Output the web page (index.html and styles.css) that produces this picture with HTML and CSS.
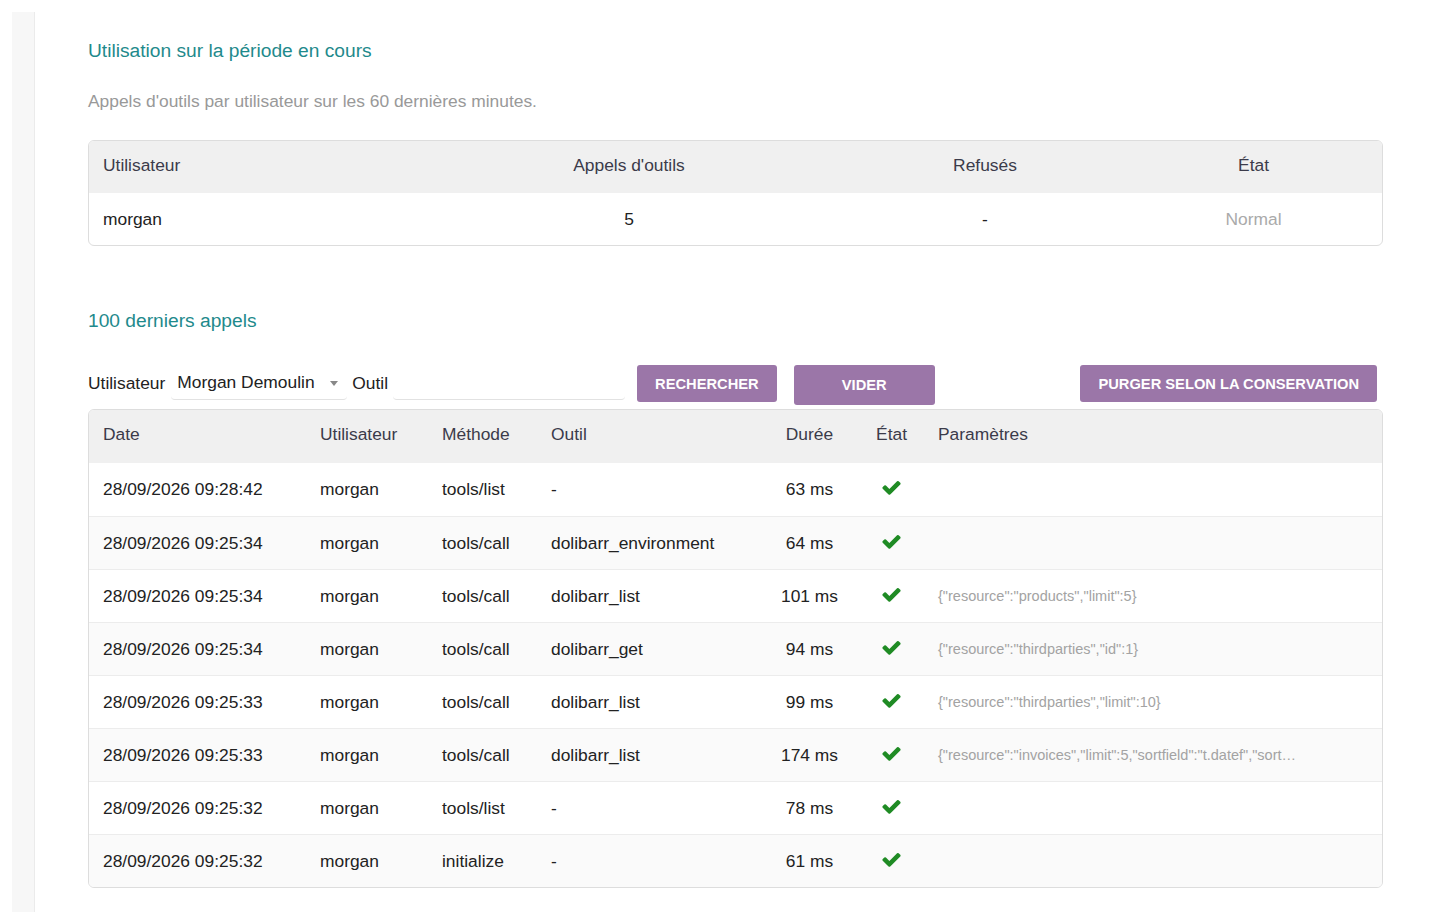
FILE: index.html
```html
<!DOCTYPE html>
<html lang="fr">
<head>
<meta charset="utf-8">
<title>Utilisation</title>
<link rel="stylesheet" href="styles.css">
</head>
<body>
<div class="page">
  <aside class="sidebar"></aside>
  <main class="main">
    <h2 class="section-title">Utilisation sur la période en cours</h2>
    <p class="hint">Appels d'outils par utilisateur sur les 60 dernières minutes.</p>

    <div class="card usage">
      <div class="row head">
        <div class="cell">Utilisateur</div>
        <div class="cell center">Appels d'outils</div>
        <div class="cell center">Refusés</div>
        <div class="cell center">État</div>
      </div>
      <div class="row">
        <div class="cell">morgan</div>
        <div class="cell center">5</div>
        <div class="cell center">-</div>
        <div class="cell center muted">Normal</div>
      </div>
    </div>

    <h2 class="section-title second">100 derniers appels</h2>

    <form class="filters">
      <label class="flabel">Utilisateur</label>
      <div class="select">
        <span>Morgan Demoulin</span>
        <span class="caret"></span>
      </div>
      <label class="flabel outil">Outil</label>
      <div class="input"></div>
      <button type="button" class="btn">RECHERCHER</button>
      <button type="button" class="btn btn-wide">VIDER</button>
      <button type="button" class="btn btn-right">PURGER SELON LA CONSERVATION</button>
    </form>

    <div class="card calls">
      <div class="row head">
        <div class="cell">Date</div>
        <div class="cell">Utilisateur</div>
        <div class="cell">Méthode</div>
        <div class="cell">Outil</div>
        <div class="cell center">Durée</div>
        <div class="cell center">État</div>
        <div class="cell">Paramètres</div>
      </div>
      <div class="row body">
        <div class="cell">28/09/2026 09:28:42</div>
        <div class="cell">morgan</div>
        <div class="cell">tools/list</div>
        <div class="cell">-</div>
        <div class="cell center">63 ms</div>
        <div class="cell center"><svg class="ok" viewBox="0 0 1792 1792"><path d="M1671 566q0 40-28 68l-724 724-136 136q-28 28-68 28t-68-28l-136-136-362-362q-28-28-28-68t28-68l136-136q28-28 68-28t68 28l294 295 656-657q28-28 68-28t68 28l136 136q28 28 28 68z"/></svg></div>
        <div class="cell params"></div>
      </div>
      <div class="row body">
        <div class="cell">28/09/2026 09:25:34</div>
        <div class="cell">morgan</div>
        <div class="cell">tools/call</div>
        <div class="cell">dolibarr_environment</div>
        <div class="cell center">64 ms</div>
        <div class="cell center"><svg class="ok" viewBox="0 0 1792 1792"><path d="M1671 566q0 40-28 68l-724 724-136 136q-28 28-68 28t-68-28l-136-136-362-362q-28-28-28-68t28-68l136-136q28-28 68-28t68 28l294 295 656-657q28-28 68-28t68 28l136 136q28 28 28 68z"/></svg></div>
        <div class="cell params"></div>
      </div>
      <div class="row body">
        <div class="cell">28/09/2026 09:25:34</div>
        <div class="cell">morgan</div>
        <div class="cell">tools/call</div>
        <div class="cell">dolibarr_list</div>
        <div class="cell center">101 ms</div>
        <div class="cell center"><svg class="ok" viewBox="0 0 1792 1792"><path d="M1671 566q0 40-28 68l-724 724-136 136q-28 28-68 28t-68-28l-136-136-362-362q-28-28-28-68t28-68l136-136q28-28 68-28t68 28l294 295 656-657q28-28 68-28t68 28l136 136q28 28 28 68z"/></svg></div>
        <div class="cell params"><span class="json">{"resource":"products","limit":5}</span></div>
      </div>
      <div class="row body">
        <div class="cell">28/09/2026 09:25:34</div>
        <div class="cell">morgan</div>
        <div class="cell">tools/call</div>
        <div class="cell">dolibarr_get</div>
        <div class="cell center">94 ms</div>
        <div class="cell center"><svg class="ok" viewBox="0 0 1792 1792"><path d="M1671 566q0 40-28 68l-724 724-136 136q-28 28-68 28t-68-28l-136-136-362-362q-28-28-28-68t28-68l136-136q28-28 68-28t68 28l294 295 656-657q28-28 68-28t68 28l136 136q28 28 28 68z"/></svg></div>
        <div class="cell params"><span class="json">{"resource":"thirdparties","id":1}</span></div>
      </div>
      <div class="row body">
        <div class="cell">28/09/2026 09:25:33</div>
        <div class="cell">morgan</div>
        <div class="cell">tools/call</div>
        <div class="cell">dolibarr_list</div>
        <div class="cell center">99 ms</div>
        <div class="cell center"><svg class="ok" viewBox="0 0 1792 1792"><path d="M1671 566q0 40-28 68l-724 724-136 136q-28 28-68 28t-68-28l-136-136-362-362q-28-28-28-68t28-68l136-136q28-28 68-28t68 28l294 295 656-657q28-28 68-28t68 28l136 136q28 28 28 68z"/></svg></div>
        <div class="cell params"><span class="json">{"resource":"thirdparties","limit":10}</span></div>
      </div>
      <div class="row body">
        <div class="cell">28/09/2026 09:25:33</div>
        <div class="cell">morgan</div>
        <div class="cell">tools/call</div>
        <div class="cell">dolibarr_list</div>
        <div class="cell center">174 ms</div>
        <div class="cell center"><svg class="ok" viewBox="0 0 1792 1792"><path d="M1671 566q0 40-28 68l-724 724-136 136q-28 28-68 28t-68-28l-136-136-362-362q-28-28-28-68t28-68l136-136q28-28 68-28t68 28l294 295 656-657q28-28 68-28t68 28l136 136q28 28 28 68z"/></svg></div>
        <div class="cell params"><span class="json">{"resource":"invoices","limit":5,"sortfield":"t.datef","sort…</span></div>
      </div>
      <div class="row body">
        <div class="cell">28/09/2026 09:25:32</div>
        <div class="cell">morgan</div>
        <div class="cell">tools/list</div>
        <div class="cell">-</div>
        <div class="cell center">78 ms</div>
        <div class="cell center"><svg class="ok" viewBox="0 0 1792 1792"><path d="M1671 566q0 40-28 68l-724 724-136 136q-28 28-68 28t-68-28l-136-136-362-362q-28-28-28-68t28-68l136-136q28-28 68-28t68 28l294 295 656-657q28-28 68-28t68 28l136 136q28 28 28 68z"/></svg></div>
        <div class="cell params"></div>
      </div>
      <div class="row body">
        <div class="cell">28/09/2026 09:25:32</div>
        <div class="cell">morgan</div>
        <div class="cell">initialize</div>
        <div class="cell">-</div>
        <div class="cell center">61 ms</div>
        <div class="cell center"><svg class="ok" viewBox="0 0 1792 1792"><path d="M1671 566q0 40-28 68l-724 724-136 136q-28 28-68 28t-68-28l-136-136-362-362q-28-28-28-68t28-68l136-136q28-28 68-28t68 28l294 295 656-657q28-28 68-28t68 28l136 136q28 28 28 68z"/></svg></div>
        <div class="cell params"></div>
      </div>
    </div>
  </main>
</div>
</body>
</html>
```

FILE: styles.css
```css
* { box-sizing: border-box; }

html, body {
  margin: 0;
  padding: 0;
  background: #ffffff;
}

body {
  font-family: "Liberation Sans", Arial, sans-serif;
  font-size: 17.4px;
  color: #222222;
}

.page {
  display: flex;
  padding: 12px;
  height: 924px;
}

.sidebar {
  width: 23px;
  flex: none;
  background: #f7f7f7;
  border-right: 1px solid #ebebeb;
}

.main {
  flex: 1;
  padding: 27px 45px 0 53px;
}

.section-title {
  margin: 0;
  font-size: 19.2px;
  font-weight: normal;
  line-height: 23px;
  color: #1f8a8c;
}

.section-title.second {
  margin-top: 63px;
}

.hint {
  margin: 27px 0 27px 0;
  line-height: 24px;
  color: #999999;
}

.card {
  border: 1px solid #dddddd;
  border-radius: 6px;
  overflow: hidden;
  background: #ffffff;
}

.row {
  display: grid;
  align-items: center;
}

.usage .row {
  grid-template-columns: 324px 432px 280px 1fr;
  height: 52px;
}

.calls .row {
  grid-template-columns: 217px 122px 109px 223px 99px 65px 1fr;
  height: 53px;
}

.row.head {
  background: #f0f0f0;
  color: #3b3b4a;
  padding-bottom: 4px;
}

.calls .row.body + .row.body {
  border-top: 1px solid #ececec;
}

.calls .row.body:nth-child(odd) {
  background: #fafafa;
}

.cell {
  padding: 0 14px;
  white-space: nowrap;
}

.cell.center {
  text-align: center;
  padding: 0;
}

.muted {
  color: #aaaaaa;
}

.ok {
  width: 21px;
  height: 21px;
  fill: #1f8b24;
  vertical-align: middle;
  margin-top: -5px;
}

.params {
  overflow: hidden;
}

.json {
  display: block;
  font-size: 14.5px;
  color: #a3a3a3;
}

.filters {
  display: flex;
  align-items: flex-start;
  margin: 33px 0 4px 0;
  height: 40px;
}

.flabel {
  line-height: 37px;
  color: #222222;
}

.select {
  margin-left: 6px;
  width: 176px;
  height: 35px;
  display: flex;
  align-items: center;
  justify-content: space-between;
  padding: 0 9px 0 6px;
  border-bottom: 1px solid #e2e2e2;
  border-radius: 0 0 4px 4px;
  color: #222222;
}

.caret {
  width: 0;
  height: 0;
  border-left: 4.5px solid transparent;
  border-right: 4.5px solid transparent;
  border-top: 5px solid #888888;
  margin-top: 2px;
}

.flabel.outil {
  margin-left: 5px;
}

.input {
  margin-left: 5px;
  width: 232px;
  height: 35px;
  border-bottom: 1px solid #e2e2e2;
  border-radius: 0 0 4px 4px;
}

.btn {
  margin-left: 12px;
  height: 37px;
  padding: 0 18px;
  border: none;
  border-radius: 3px;
  background: #9b76a8;
  color: #ffffff;
  font-family: "Liberation Sans", Arial, sans-serif;
  font-weight: bold;
  font-size: 14.7px;
}

.btn-wide {
  margin-left: 17px;
  width: 141px;
  height: 40px;
}

.btn-right {
  margin-left: auto;
  margin-right: 6px;
}
```
